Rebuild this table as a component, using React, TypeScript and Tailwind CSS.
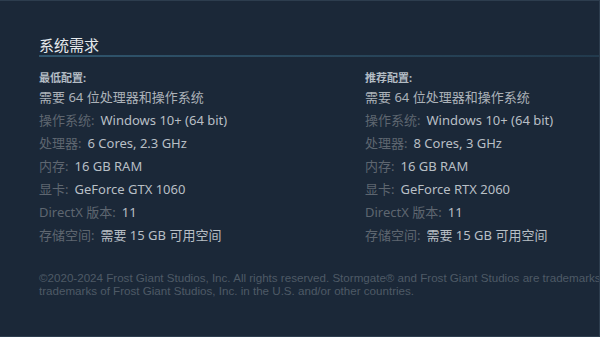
const minimum = [
  ["操作系统:", "Windows 10+ (64 bit)"],
  ["处理器:", "6 Cores, 2.3 GHz"],
  ["内存:", "16 GB RAM"],
  ["显卡:", "GeForce GTX 1060"],
  ["DirectX 版本:", "11"],
  ["存储空间:", "需要 15 GB 可用空间"],
];

const recommended = [
  ["操作系统:", "Windows 10+ (64 bit)"],
  ["处理器:", "8 Cores, 3 GHz"],
  ["内存:", "16 GB RAM"],
  ["显卡:", "GeForce RTX 2060"],
  ["DirectX 版本:", "11"],
  ["存储空间:", "需要 15 GB 可用空间"],
];

function Column({ title, rows }: { title: string; rows: string[][] }) {
  return (
    <div className="w-[326px] shrink-0">
      <div className="text-[11px] font-bold leading-[16px] text-[#b3bcc4]">{title}</div>
      <ul className="text-[13px] leading-[23px]">
        <li className="text-[#acb2b8]">需要 64 位处理器和操作系统</li>
        {rows.map(([label, value]) => (
          <li key={label} className="whitespace-nowrap">
            <span className="text-[#5e6670]">{label}</span>
            <span className="ml-[6px] text-[#b8bfc5]">{value}</span>
          </li>
        ))}
      </ul>
    </div>
  );
}

export default function App() {
  return (
    <main
      className="w-[600px] h-[337px] overflow-hidden bg-[#1b2838] border-t border-r border-b border-[#2d3d4e]"
      style={{ fontFamily: '"Noto Sans", "Noto Sans CJK SC", sans-serif' }}
    >
      <section className="pl-[39px] pt-[34px]">
        <h2 className="text-[15px] leading-[20px] text-[#e5e9ec]">系统需求</h2>
        <div className="h-[2px] bg-gradient-to-r from-[#30566e] via-[#29475c] to-[#223a4d]" />

        <div className="flex mt-[13px]">
          <Column title="最低配置:" rows={minimum} />
          <Column title="推荐配置:" rows={recommended} />
        </div>
      </section>

      <footer
        className="pl-[39px] mt-[24px] text-[11.6px] leading-[13px] text-[#4e5a66] whitespace-nowrap"
        style={{ fontFamily: '"Liberation Sans", Arial, sans-serif' }}
      >
        <p>©2020-2024 Frost Giant Studios, Inc. All rights reserved. Stormgate® and Frost Giant Studios are trademarks</p>
        <p>trademarks of Frost Giant Studios, Inc. in the U.S. and/or other countries.</p>
      </footer>
    </main>
  );
}
